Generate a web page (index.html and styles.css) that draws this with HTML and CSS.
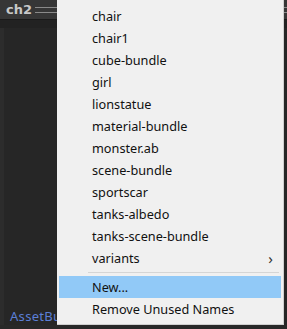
FILE: index.html
```html
<!DOCTYPE html>
<html lang="en">
<head>
    <meta charset="UTF-8">
    <title>Asset Bundle Menu</title>
    <link rel="stylesheet" href="styles.css">
</head>
<body>
    <div class="panel">
        <div class="panel-header">
            <span class="panel-title">ch2</span>
            <span class="panel-grip"></span>
        </div>
        <div class="panel-band"></div>
        <div class="panel-body">
            <span class="panel-label">AssetBundle</span>
        </div>
    </div>

    <!-- context menu for bundle names -->
    <div class="menu">
        <div class="menu-item">chair</div>
        <div class="menu-item">chair1</div>
        <div class="menu-item">cube-bundle</div>
        <div class="menu-item">girl</div>
        <div class="menu-item">lionstatue</div>
        <div class="menu-item">material-bundle</div>
        <div class="menu-item">monster.ab</div>
        <div class="menu-item">scene-bundle</div>
        <div class="menu-item">sportscar</div>
        <div class="menu-item">tanks-albedo</div>
        <div class="menu-item">tanks-scene-bundle</div>
        <div class="menu-item has-sub">variants<span class="arrow">&#x203A;</span></div>
        <div class="menu-sep"></div>
        <div class="menu-item active">New...</div>
        <div class="menu-item">Remove Unused Names</div>
    </div>
</body>
</html>
```

FILE: styles.css
```css
html, body {
    margin: 0;
    height: 100%;
}
body {
    background: #1f1f1f;
    font-family: "Noto Sans", "Liberation Sans", sans-serif;
    position: relative;
    overflow: hidden;
}
.panel {
    width: 100%;
    height: 100%;
    display: flex;
    flex-direction: column;
    background: #282828;
}
.panel-header {
    height: 19px;
    display: flex;
    align-items: center;
    gap: 3px;
    padding-left: 6px;
    background: #363636;
    border-bottom: 1px solid #1a1a1a;
}
.panel-title {
    color: #c8c8c8;
    font-family: "DejaVu Sans", sans-serif;
    font-weight: bold;
    font-size: 13px;
}
.panel-grip {
    flex: 1;
    height: 4px;
    border-top: 1px solid #8a8a8a;
    border-bottom: 1px solid #8a8a8a;
}
.panel-band {
    height: 8px;
    background: #222;
}
.panel-body {
    flex: 1;
    display: flex;
    align-items: flex-end;
    padding: 0 0 0 6px;
    background: #262626;
    border-left: 4px solid #2c2c2c;
    margin-bottom: 4px;
}
.panel-label {
    color: #5b7fd6;
    font-size: 13px;
    letter-spacing: 0.3px;
}
.menu {
    position: absolute;
    left: 57px;
    top: 0;
    width: 227px;
    padding: 5px 2px 4px 2px;
    background: #f0f0f0;
    border-right: 1px solid #cfcfcf;
    border-bottom: 1px solid #cfcfcf;
    box-sizing: border-box;
}
.menu-item {
    height: 22px;
    line-height: 22px;
    padding-left: 33px;
    padding-right: 8px;
    font-size: 12.7px;
    color: #111;
    display: flex;
    justify-content: space-between;
}
.menu-item.active {
    background: #91c9f7;
}
.arrow {
    font-size: 15px;
    color: #333;
}
.menu-sep {
    height: 1px;
    margin: 3px 2px 3px 29px;
    background: #d5d5d5;
}
```
